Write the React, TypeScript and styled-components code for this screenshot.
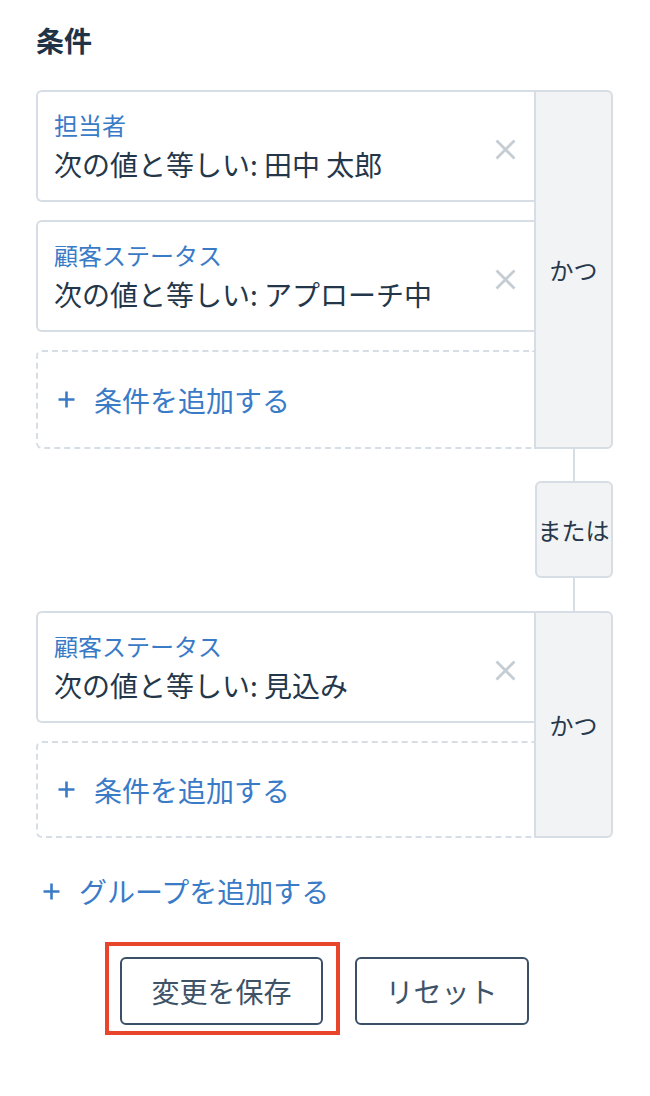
import React from "react";
import styled, { createGlobalStyle } from "styled-components";

const GlobalStyle = createGlobalStyle`
  html, body { margin: 0; padding: 0; background: #ffffff; }
  body {
    font-family: "Noto Sans CJK JP", "Noto Sans", "Liberation Sans", sans-serif;
    -webkit-font-smoothing: antialiased;
  }
  * { box-sizing: border-box; }
`;

const Page = styled.div`
  width: 650px;
  padding: 22px 37px 60px 36px;
`;

const Title = styled.h2`
  margin: 0;
  font-size: 28px;
  line-height: 36px;
  font-weight: 700;
  color: #1f3347;
`;

const Groups = styled.div`
  margin-top: 32px;
  display: flex;
  flex-direction: column;
`;

const Group = styled.div`
  display: flex;
  align-items: stretch;
`;

const Conditions = styled.div`
  flex: 1;
  display: flex;
  flex-direction: column;
  gap: 18px;
`;

const Card = styled.div`
  height: 112px;
  display: flex;
  align-items: center;
  background: #ffffff;
  border: 2px solid #d6dde4;
  border-right: none;
  border-radius: 6px 0 0 6px;
  padding: 0 18px 0 16px;
`;

const CardText = styled.div`
  flex: 1;
  display: flex;
  flex-direction: column;
`;

const Label = styled.div`
  font-size: 24px;
  line-height: 30px;
  color: #3a7bc8;
`;

const Value = styled.div`
  margin-top: 6px;
  font-size: 28px;
  line-height: 36px;
  color: #24374a;
`;

const RemoveButton = styled.button`
  flex: none;
  width: 21px;
  height: 21px;
  margin-top: 7px;
  padding: 0;
  border: none;
  background: none;
  display: flex;
  cursor: pointer;
`;

const AddCard = styled.div<{ $h: number }>`
  height: ${(p) => p.$h}px;
  display: flex;
  align-items: center;
  gap: 19px;
  padding-left: 20px;
  border: 2px dashed #d6dde4;
  border-right: none;
  border-radius: 6px 0 0 6px;
  font-size: 28px;
  line-height: 36px;
  color: #3a7bc8;
`;

const Joiner = styled.div`
  flex: none;
  width: 79px;
  display: flex;
  align-items: center;
  justify-content: center;
  background: #f1f3f5;
  border: 2px solid #d6dde4;
  border-radius: 0 6px 6px 0;
  font-size: 24px;
  line-height: 30px;
  color: #27394b;
`;

const OrSection = styled.div`
  align-self: flex-end;
  width: 79px;
  display: flex;
  flex-direction: column;
  align-items: center;
`;

const Connector = styled.div<{ $h: number }>`
  width: 2px;
  height: ${(p) => p.$h}px;
  background: #d6dde4;
`;

const OrBox = styled.div`
  width: 78px;
  height: 97px;
  display: flex;
  align-items: center;
  justify-content: center;
  background: #f1f3f5;
  border: 2px solid #d6dde4;
  border-radius: 6px;
  font-size: 24px;
  line-height: 30px;
  color: #27394b;
`;

const AddGroup = styled.div`
  margin-top: 35px;
  display: flex;
  align-items: center;
  gap: 19px;
  padding-left: 7px;
  font-size: 28px;
  line-height: 36px;
  color: #3a7bc8;
`;

const Actions = styled.div`
  margin-top: 48px;
  display: flex;
  justify-content: center;
  gap: 32px;
`;

const Highlight = styled.div`
  position: relative;
  display: flex;
  &::after {
    content: "";
    position: absolute;
    top: -15px;
    left: -15px;
    right: -17px;
    bottom: -10px;
    border: 4px solid #e8452c;
    pointer-events: none;
  }
`;

const Button = styled.button`
  height: 68px;
  padding: 0 29px;
  background: #ffffff;
  border: 2px solid #3b5067;
  border-radius: 6px;
  font-family: "Noto Sans CJK JP", "Noto Sans", sans-serif;
  font-size: 28px;
  line-height: 36px;
  color: #3e5268;
  cursor: pointer;
`;

const CloseIcon = () => (
  <svg width="21" height="21" viewBox="0 0 21 21">
    <path d="M1.5 1.5 L19.5 19.5 M19.5 1.5 L1.5 19.5" stroke="#c5cdd4" strokeWidth="2.8" strokeLinecap="butt" fill="none" />
  </svg>
);

const PlusIcon = () => (
  <svg width="17" height="17" viewBox="0 0 17 17">
    <path d="M8.5 0.5 V16.5 M0.5 8.5 H16.5" stroke="#3a7bc8" strokeWidth="2.6" fill="none" />
  </svg>
);

type Cond = { label: string; value: string };

const ConditionCard = ({ c }: { c: Cond }) => (
  <Card>
    <CardText>
      <Label>{c.label}</Label>
      <Value>{c.value}</Value>
    </CardText>
    <RemoveButton aria-label="削除">
      <CloseIcon />
    </RemoveButton>
  </Card>
);

const ConditionGroup = ({ items, addHeight }: { items: Cond[]; addHeight: number }) => (
  <Group>
    <Conditions>
      {items.map((c, i) => (
        <ConditionCard key={i} c={c} />
      ))}
      <AddCard $h={addHeight}>
        <PlusIcon />
        <span>条件を追加する</span>
      </AddCard>
    </Conditions>
    <Joiner>かつ</Joiner>
  </Group>
);

export default function App() {
  return (
    <>
      <GlobalStyle />
      <Page>
        <Title>条件</Title>
        <Groups>
          <ConditionGroup
            addHeight={99}
            items={[
              { label: "担当者", value: "次の値と等しい: 田中 太郎" },
              { label: "顧客ステータス", value: "次の値と等しい: アプローチ中" },
            ]}
          />
          <OrSection>
            <Connector $h={32} />
            <OrBox>または</OrBox>
            <Connector $h={33} />
          </OrSection>
          <ConditionGroup
            addHeight={97}
            items={[{ label: "顧客ステータス", value: "次の値と等しい: 見込み" }]}
          />
        </Groups>
        <AddGroup>
          <PlusIcon />
          <span>グループを追加する</span>
        </AddGroup>
        <Actions>
          <Highlight>
            <Button>変更を保存</Button>
          </Highlight>
          <Button>リセット</Button>
        </Actions>
      </Page>
    </>
  );
}
